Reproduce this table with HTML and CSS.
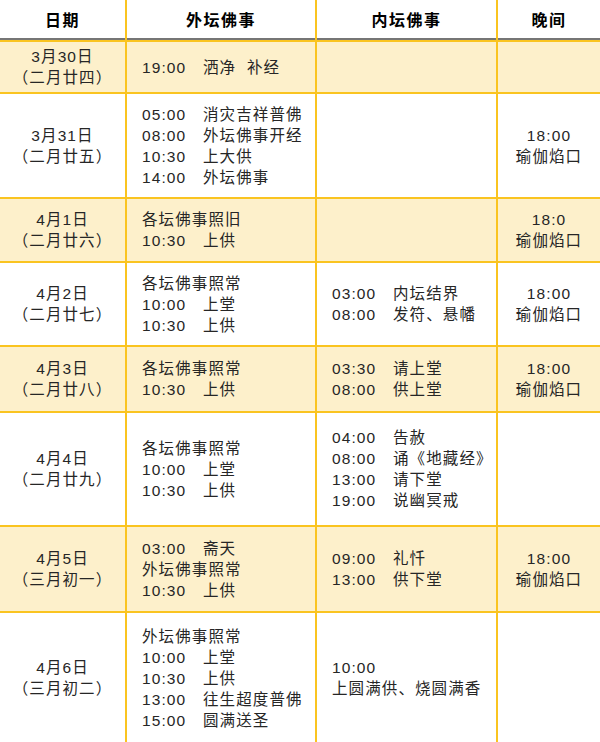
FILE: index.html
```html
<!DOCTYPE html>
<html lang="zh-CN">
<head>
<meta charset="utf-8">
<title>法会日程</title>
<link rel="stylesheet" href="styles.css">
</head>
<body>
<table class="schedule">
  <colgroup>
    <col class="c-date">
    <col class="c-outer">
    <col class="c-inner">
    <col class="c-night">
  </colgroup>
  <thead>
    <tr class="head">
      <th>日期</th>
      <th>外坛佛事</th>
      <th>内坛佛事</th>
      <th>晚间</th>
    </tr>
  </thead>
  <tbody>
    <tr class="shade r1">
      <td class="date">3月30日<br>（二月廿四）</td>
      <td class="ev"><span class="t">19:00</span>洒净&nbsp;&nbsp;补经</td>
      <td class="ev"></td>
      <td class="night"></td>
    </tr>
    <tr class="r2">
      <td class="date">3月31日<br>（二月廿五）</td>
      <td class="ev"><span class="t">05:00</span>消灾吉祥普佛<br><span class="t">08:00</span>外坛佛事开经<br><span class="t">10:30</span>上大供<br><span class="t">14:00</span>外坛佛事</td>
      <td class="ev"></td>
      <td class="night">18:00<br>瑜伽焰口</td>
    </tr>
    <tr class="shade r3">
      <td class="date">4月1日<br>（二月廿六）</td>
      <td class="ev">各坛佛事照旧<br><span class="t">10:30</span>上供</td>
      <td class="ev"></td>
      <td class="night">18:0<br>瑜伽焰口</td>
    </tr>
    <tr class="r4">
      <td class="date">4月2日<br>（二月廿七）</td>
      <td class="ev">各坛佛事照常<br><span class="t">10:00</span>上堂<br><span class="t">10:30</span>上供</td>
      <td class="ev"><span class="t">03:00</span>内坛结界<br><span class="t">08:00</span>发符、悬幡</td>
      <td class="night">18:00<br>瑜伽焰口</td>
    </tr>
    <tr class="shade r5">
      <td class="date">4月3日<br>（二月廿八）</td>
      <td class="ev">各坛佛事照常<br><span class="t">10:30</span>上供</td>
      <td class="ev"><span class="t">03:30</span>请上堂<br><span class="t">08:00</span>供上堂</td>
      <td class="night">18:00<br>瑜伽焰口</td>
    </tr>
    <tr class="r6">
      <td class="date">4月4日<br>（二月廿九）</td>
      <td class="ev">各坛佛事照常<br><span class="t">10:00</span>上堂<br><span class="t">10:30</span>上供</td>
      <td class="ev"><span class="t">04:00</span>告赦<br><span class="t">08:00</span>诵《地藏经》<br><span class="t">13:00</span>请下堂<br><span class="t">19:00</span>说幽冥戒</td>
      <td class="night"></td>
    </tr>
    <tr class="shade r7">
      <td class="date">4月5日<br>（三月初一）</td>
      <td class="ev"><span class="t">03:00</span>斋天<br>外坛佛事照常<br><span class="t">10:30</span>上供</td>
      <td class="ev"><span class="t">09:00</span>礼忏<br><span class="t">13:00</span>供下堂</td>
      <td class="night">18:00<br>瑜伽焰口</td>
    </tr>
    <tr class="r8">
      <td class="date">4月6日<br>（三月初二）</td>
      <td class="ev">外坛佛事照常<br><span class="t">10:00</span>上堂<br><span class="t">10:30</span>上供<br><span class="t">13:00</span>往生超度普佛<br><span class="t">15:00</span>圆满送圣</td>
      <td class="ev">10:00<br>上圆满供、烧圆满香</td>
      <td class="night"></td>
    </tr>
  </tbody>
</table>
</body>
</html>
```
FILE: styles.css
```css
html, body {
  margin: 0;
  padding: 0;
  background: #ffffff;
}

.schedule {
  width: 600px;
  table-layout: fixed;
  border-collapse: collapse;
  font-family: "Liberation Sans", "Noto Sans CJK SC", sans-serif;
  font-size: 15.5px;
  letter-spacing: 1.1px;
  line-height: 21px;
  color: #262626;
}

.c-date { width: 126px; }
.c-outer { width: 190px; }
.c-inner { width: 181px; }
.c-night { width: 103px; }

.schedule th,
.schedule td {
  border: 2px solid #fac420;
  padding: 0;
  vertical-align: middle;
}

.schedule th:first-child,
.schedule td:first-child {
  border-left: none;
}

.schedule th:last-child,
.schedule td:last-child {
  border-right: none;
}

.schedule th {
  border-top: none;
  height: 40px;
  font-size: 16px;
  letter-spacing: 1.5px;
  font-weight: bold;
  color: #000000;
  text-align: center;
  border-bottom: 1px solid #1a1a1a;
  background: linear-gradient(#767676, #767676) bottom / 100% 2px no-repeat;
}

.shade td {
  background: #fdf0cb;
}

.date,
.night {
  text-align: center;
}

.ev {
  text-align: left;
  padding-left: 15px !important;
  white-space: nowrap;
}

.t {
  display: inline-block;
  width: 61px;
}

.r1 td { height: 50px; }
.r2 td { height: 103px; }
.r3 td { height: 62px; }
.r4 td { height: 82px; }
.r5 td { height: 64px; }
.r6 td { height: 112px; }
.r7 td { height: 84px; }
.r8 td { height: 130px; border-bottom: none; }
```
